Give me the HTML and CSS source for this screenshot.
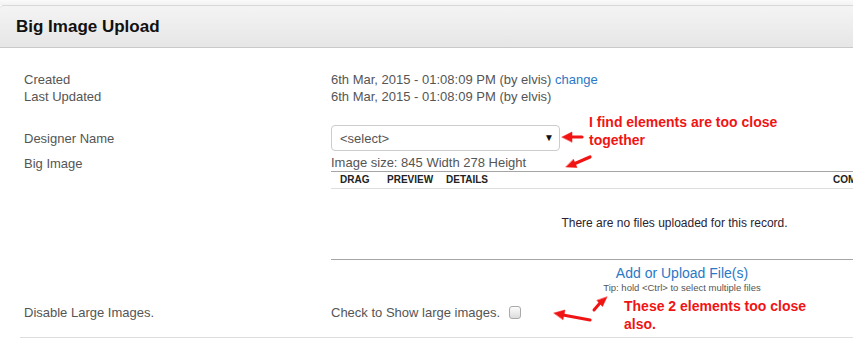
FILE: index.html
```html
<!DOCTYPE html>
<html lang="en">
<head>
  <meta charset="UTF-8">
  <title>Big Image Upload</title>
  <link rel="stylesheet" href="styles.css">
</head>
<body>
  <div class="page">
    <div class="panel-heading">
      <h2>Big Image Upload</h2>
    </div>

    <div class="panel-body">
      <div class="row meta">
        <div class="label">Created<br>Last Updated</div>
        <div class="value">
          6th Mar, 2015 - 01:08:09 PM (by elvis) <a href="#">change</a><br>
          6th Mar, 2015 - 01:08:09 PM (by elvis)
        </div>
      </div>

      <div class="row designer">
        <div class="label">Designer Name</div>
        <div class="value">
          <div class="select-wrap">
            <select>
              <option>&lt;select&gt;</option>
            </select>
            <span class="caret">&#9660;</span>
          </div>
        </div>
      </div>

      <div class="row image">
        <div class="label">Big Image</div>
        <div class="value">
          <div class="size">Image size: 845 Width 278 Height</div>
          <div class="files">
            <div class="files-head">
              <span class="c-drag">DRAG</span>
              <span class="c-preview">PREVIEW</span>
              <span class="c-details">DETAILS</span>
              <span class="c-comments">COMMENTS</span>
            </div>
            <div class="files-empty">There are no files uploaded for this record.</div>
          </div>
          <div class="upload">
            <a href="#">Add or Upload File(s)</a>
            <small>Tip: hold &lt;Ctrl&gt; to select multiple files</small>
          </div>
        </div>
      </div>

      <div class="row large">
        <div class="label">Disable Large Images.</div>
        <div class="value">Check to Show large images. <input type="checkbox" class="check"></div>
      </div>
    </div>

    <!-- annotations drawn on top of the screenshot -->
    <div class="note note-top">I find elements are too close<br>together</div>
    <div class="note note-bottom">These 2 elements too close<br>also.</div>
    <svg class="arrows" width="853" height="350" viewBox="0 0 853 350">
      <g fill="#f01414" stroke="#f01414" stroke-linecap="round">
        <line x1="582" y1="137" x2="570" y2="137" stroke-width="3.2"/>
        <polygon points="562,137 572,132 572,142" stroke-width="0.5"/>

        <line x1="590" y1="157" x2="575" y2="163.5" stroke-width="3.2"/>
        <polygon points="566,167 577,167.5 573.5,159.5" stroke-width="0.5"/>

        <line x1="594" y1="310" x2="600" y2="303" stroke-width="3"/>
        <polygon points="607,297 602.5,306.5 597,300.5" stroke-width="0.5"/>

        <line x1="590" y1="320" x2="563" y2="315" stroke-width="3.2"/>
        <polygon points="554,313 565,310 563,319.5" stroke-width="0.5"/>
      </g>
    </svg>
  </div>
</body>
</html>
```

FILE: styles.css
```css
html, body {
  margin: 0;
  overflow: hidden;
}
body {
  font-family: "Liberation Sans", Arial, sans-serif;
  font-size: 13px;
  color: #555;
  background: #fff;
}
a {
  color: #2a78c6;
  text-decoration: none;
}
.page {
  position: relative;
  width: 1040px;
  padding-top: 5px;
  background: linear-gradient(#fafafa, #f3f3f3) top / 100% 5px no-repeat;
}
.panel-heading {
  height: 41px;
  padding-left: 16px;
  border-top: 1px solid #d9d9d9;
  border-bottom: 1px solid #c9c9c9;
  border-top-left-radius: 4px;
  background: linear-gradient(#f4f4f4, #e6e6e6);
}
.panel-heading h2 {
  margin: 0;
  font-size: 17px;
  line-height: 42px;
  color: #111;
}
.panel-body {
  padding: 23px 0 0 20px;
}
.row {
  display: flex;
  line-height: 17px;
}
.label {
  width: 311px;
  padding-left: 4px;
  box-sizing: border-box;
  flex-shrink: 0;
}
.value {
  width: 700px;
}
.designer {
  margin-top: 20px;
  line-height: 27px;
}
.select-wrap {
  position: relative;
  width: 229px;
}
.select-wrap select {
  display: block;
  width: 100%;
  height: 26px;
  padding: 0 8px;
  border: 1px solid #ccc;
  border-radius: 4px;
  background: #fff;
  color: #555;
  font-family: inherit;
  font-size: 13px;
  -webkit-appearance: none;
  appearance: none;
}
.caret {
  position: absolute;
  right: 6px;
  top: 0;
  font-size: 10px;
  line-height: 26px;
  color: #111;
}
.image {
  margin-top: 3px;
}
.size {
  line-height: 16px;
}
.files {
  width: 687px;
  border-top: 1px solid #a5a5a5;
  border-bottom: 1px solid #a5a5a5;
}
.files-head {
  display: flex;
  height: 16px;
  padding-left: 9px;
  border-bottom: 1px solid #ddd;
  font-size: 10px;
  font-weight: bold;
  line-height: 15px;
  color: #222;
  white-space: nowrap;
}
.c-drag { width: 47px; }
.c-preview { width: 59px; }
.c-details { width: 387px; }
.files-empty {
  padding: 26px 0 28px;
  line-height: 16px;
  font-size: 12px;
  color: #2a2230;
  text-align: center;
}
.upload {
  width: 702px;
  padding-top: 4px;
  text-align: center;
}
.upload a {
  display: block;
  font-size: 14px;
  line-height: 18px;
}
.upload small {
  display: block;
  font-size: 9.5px;
  line-height: 12px;
  color: #555;
}
.large {
  margin-top: 10px;
  padding-bottom: 16px;
  border-bottom: 1px solid #ddd;
}
.check {
  -webkit-appearance: none;
  appearance: none;
  width: 12px;
  height: 13px;
  margin: 0 0 0 5px;
  vertical-align: -2px;
  border: 1px solid #a9a9a9;
  border-radius: 3px;
  background: linear-gradient(#fcfcfc, #dcdcdc);
}
.note {
  position: absolute;
  font-size: 14px;
  font-weight: bold;
  line-height: 18px;
  color: #f01414;
  white-space: nowrap;
}
.note-top {
  left: 589px;
  top: 113px;
}
.note-bottom {
  left: 624px;
  top: 297px;
}
.arrows {
  position: absolute;
  left: 0;
  top: 0;
  pointer-events: none;
}
```
